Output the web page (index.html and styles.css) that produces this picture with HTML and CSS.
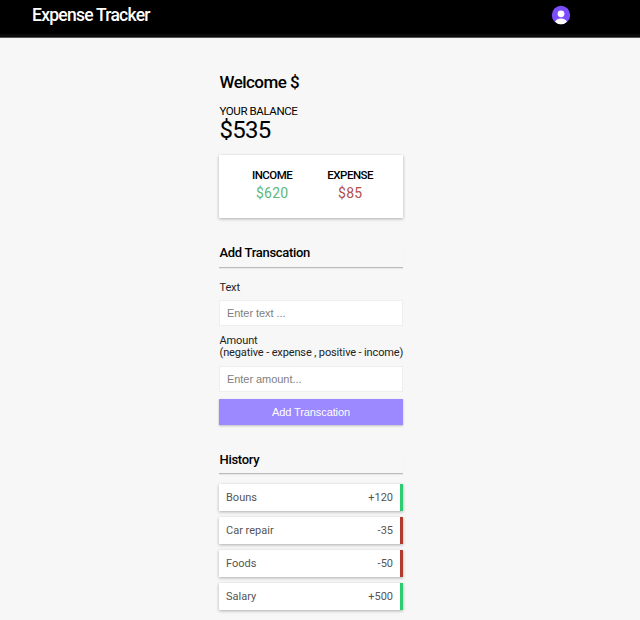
FILE: index.html
```html
<!DOCTYPE html>
<html lang="en">
<head>
<meta charset="utf-8">
<title>Expense Tracker</title>
<link rel="stylesheet" href="styles.css">
</head>
<body>
<header class="topbar">
  <h1 class="brand">Expense Tracker</h1>
  <svg class="avatar" width="20" height="20" viewBox="0 0 20 20" aria-hidden="true">
    <defs><clipPath id="disc"><circle cx="10" cy="10" r="9.2"/></clipPath></defs>
    <circle cx="10" cy="10" r="9.2" fill="#7c4dff"/>
    <g clip-path="url(#disc)" fill="#fff">
      <circle cx="10" cy="8.8" r="3.4"/>
      <ellipse cx="10" cy="17.5" rx="6" ry="4"/>
    </g>
  </svg>
</header>
<main class="tracker">
  <h2 class="welcome">Welcome $</h2>
  <h4 class="balance-label">YOUR BALANCE</h4>
  <p class="balance">$535</p>
  <section class="summary">
    <div class="summary-col">
      <h4 class="summary-title">INCOME</h4>
      <p class="summary-value plus">$620</p>
    </div>
    <div class="summary-col">
      <h4 class="summary-title">EXPENSE</h4>
      <p class="summary-value minus">$85</p>
    </div>
  </section>
  <h3 class="section-title form-title">Add Transcation</h3>
  <form class="form">
    <label class="field-label" for="text">Text</label>
    <input class="field" id="text" type="text" placeholder="Enter text ...">
    <label class="field-label amount-label" for="amount">Amount<br>(negative - expense , positive - income)</label>
    <input class="field" id="amount" type="text" placeholder="Enter amount...">
    <button class="submit" type="button">Add Transcation</button>
  </form>
  <h3 class="section-title history-title">History</h3>
  <ul class="history">
    <li class="item item-plus"><span>Bouns</span><span>+120</span></li>
    <li class="item item-minus"><span>Car repair</span><span>-35</span></li>
    <li class="item item-minus"><span>Foods</span><span>-50</span></li>
    <li class="item item-plus"><span>Salary</span><span>+500</span></li>
  </ul>
</main>
</body>
</html>
```
FILE: styles.css
```css
* { box-sizing: border-box; }
html, body { margin: 0; height: 620px; overflow: hidden; }
body {
  background: #f7f7f7;
  color: #000;
  font-family: Roboto, "Liberation Sans", sans-serif;
}
.topbar {
  height: 38px;
  background: #000;
  border-bottom: 1px solid #555;
  box-shadow: inset 0 -3px 0 #0c0c0c;
  display: flex;
  align-items: flex-start;
  justify-content: space-between;
  padding: 5px 69px 0 32px;
}
.brand {
  margin: 0;
  color: #fff;
  font-size: 17.5px;
  line-height: 21px;
  font-weight: 500;
  letter-spacing: -.75px;
}
.avatar { display: block; }
.tracker {
  width: 184px;
  margin-left: 219px;
  padding-top: 34px;
}
.welcome {
  margin: 0;
  padding-left: .5px;
  font-size: 17px;
  line-height: 20px;
  font-weight: 500;
  letter-spacing: -.55px;
}
.balance-label {
  margin: 12px 0 0;
  padding-left: .5px;
  font-size: 11.5px;
  line-height: 14px;
  font-weight: 400;
  letter-spacing: -.4px;
}
.balance {
  margin: 0;
  padding-left: .5px;
  font-size: 24px;
  line-height: 24px;
  font-weight: 400;
  letter-spacing: -.7px;
}
.summary {
  margin-top: 13px;
  height: 63px;
  background: #fff;
  box-shadow: 0 1px 3px rgba(0,0,0,.3);
  display: flex;
  justify-content: center;
  gap: 35px;
  padding: 13px 0 0 3px;
  text-align: center;
}
.summary-title {
  margin: 0;
  font-size: 11.5px;
  line-height: 14px;
  font-weight: 500;
  letter-spacing: -.5px;
}
.summary-value {
  margin: 1px 0 0;
  font-size: 14px;
  line-height: 20px;
  letter-spacing: .25px;
}
.plus { color: #5cb87a; }
.minus { color: #b0504a; }
.section-title {
  margin: 0;
  padding-left: .5px;
  font-size: 13px;
  line-height: 17px;
  font-weight: 500;
  letter-spacing: -.3px;
  padding-bottom: 6px;
  border-bottom: 1px solid #bbb;
  box-shadow: 0 1px 1px rgba(0,0,0,.06);
}
.form-title { margin-top: 26px; }
.form {
  display: flex;
  flex-direction: column;
  padding-top: 14px;
}
.field-label {
  font-size: 11px;
  line-height: 12px;
  color: #222;
  padding-left: .5px;
  white-space: nowrap;
  letter-spacing: -.13px;
}
.amount-label { margin-top: 9px; }
.field {
  display: block;
  width: 100%;
  height: 26px;
  margin-top: 6px;
  padding: 0 7px;
  background: #fff;
  border: 1px solid #eee;
  font-family: "Liberation Sans", Arial, sans-serif;
  font-size: 11px;
  letter-spacing: -.05px;
  outline: none;
}
#amount { margin-top: 7px; }
.field::placeholder { color: #808080; opacity: 1; }
.submit {
  height: 26px;
  margin-top: 7px;
  border: 0;
  background: #9c88ff;
  color: #fff;
  font-family: "Liberation Sans", Arial, sans-serif;
  font-size: 11px;
  letter-spacing: -.1px;
  box-shadow: 0 1px 2px rgba(0,0,0,.25);
  padding: 0;
}
.history-title { margin-top: 25.5px; padding-bottom: 5.5px; }
.history {
  list-style: none;
  margin: 10px 0 0;
  padding: 0;
  display: flex;
  flex-direction: column;
  gap: 6px;
}
.item {
  height: 27px;
  background: #fff;
  box-shadow: 0 1px 3px rgba(0,0,0,.3);
  display: flex;
  align-items: center;
  justify-content: space-between;
  padding: 0 7px;
  font-size: 11px;
  color: #555;
  border-right: 3px solid;
}
.item-plus { border-right-color: #2ecc71; }
.item-minus { border-right-color: #b03a2e; }
```
